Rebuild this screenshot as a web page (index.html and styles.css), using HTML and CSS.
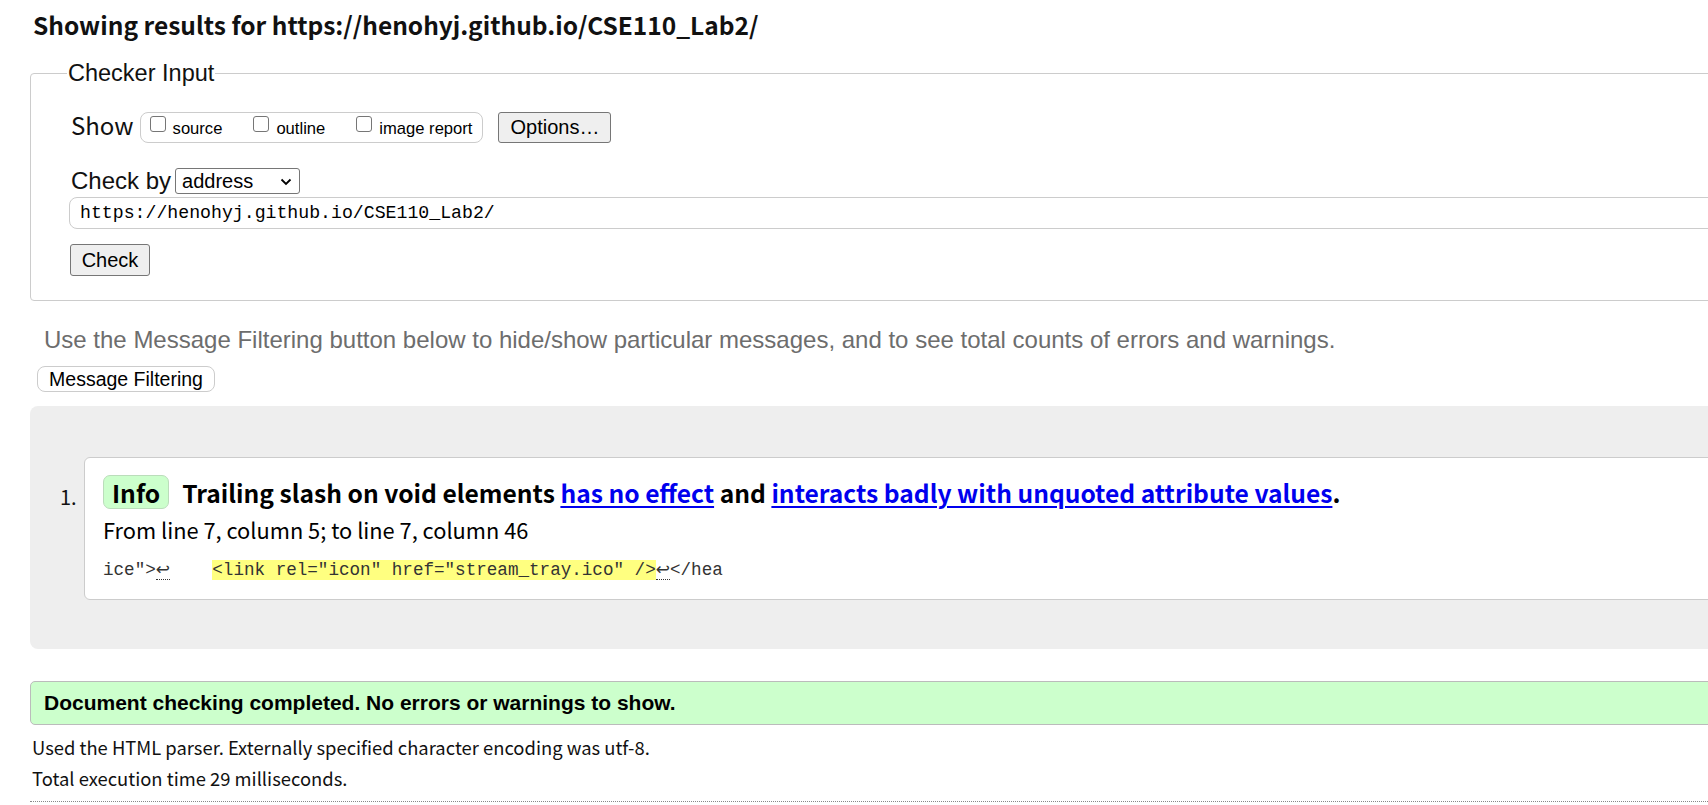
FILE: index.html
```html
<!DOCTYPE html>
<html lang="en">
<head>
<meta charset="utf-8">
<title>Showing results for https://henohyj.github.io/CSE110_Lab2/ - Nu Html Checker</title>
<link rel="stylesheet" href="styles.css">
</head>
<body>
<div class="page">
  <h2 class="results-title">Showing results for https://henohyj.github.io/CSE110_Lab2/</h2>

  <fieldset class="checker">
    <legend class="checker-legend">Checker Input</legend>
    <div class="show-row">
      <span class="row-label show-label">Show</span>
      <span class="show-group">
        <label class="opt"><input type="checkbox" class="cb"><span>source</span></label>
        <label class="opt"><input type="checkbox" class="cb"><span>outline</span></label>
        <label class="opt"><input type="checkbox" class="cb"><span>image report</span></label>
      </span>
      <button class="btn btn-options" type="button">Options…</button>
    </div>
    <div class="checkby-row">
      <span class="row-label">Check by</span>
      <span class="select-wrap">
        <select class="select"><option>address</option></select>
        <svg class="chev" width="12" height="8" viewBox="0 0 12 8"><path d="M1.5 1.5 L6 6 L10.5 1.5" fill="none" stroke="#000" stroke-width="1.8"/></svg>
      </span>
    </div>
    <div class="url-row">
      <input class="url" type="text" value="https://henohyj.github.io/CSE110_Lab2/">
    </div>
    <div class="check-row">
      <button class="btn btn-check" type="button">Check</button>
    </div>
  </fieldset>

  <p class="filter-note">Use the Message Filtering button below to hide/show particular messages, and to see total counts of errors and warnings.</p>
  <button class="btn-filter" type="button">Message Filtering</button>

  <div class="results">
    <ol class="messages">
      <li class="message">
        <span class="num">1.</span>
        <div class="msg-box">
          <p class="msg-title"><span class="badge">Info</span><span class="msg-text">Trailing slash on void elements <a href="#">has no effect</a> and <a href="#">interacts badly with unquoted attribute values</a>.</span></p>
          <p class="location">From line 7, column 5; to line 7, column 46</p>
          <p class="extract"><code>ice"&gt;<span class="lf">↩</span>    <mark class="hl">&lt;link rel="icon" href="stream_tray.ico" /&gt;</mark><span class="lf">↩</span>&lt;/hea</code></p>
        </div>
      </li>
    </ol>
  </div>

  <p class="success">Document checking completed. No errors or warnings to show.</p>
  <p class="details">Used the HTML parser. Externally specified character encoding was utf-8.</p>
  <p class="details">Total execution time 29 milliseconds.</p>
  <hr class="dotted">
</div>
</body>
</html>
```

FILE: styles.css
```css
html, body {
  margin: 0;
  padding: 0;
  overflow: hidden;
  background: #fff;
}

.page {
  width: 1800px;
  padding-left: 30px;
  font-family: "Liberation Sans", Arial, sans-serif;
  color: #000;
}

.results-title {
  margin: 0;
  padding: 8px 0 0 3px;
  height: 46px;
  box-sizing: border-box;
  font-family: "Noto Sans CJK SC", "Liberation Sans", sans-serif;
  font-weight: 700;
  font-size: 24.5px;
  line-height: 34px;
  color: #111;
}

.checker {
  margin: 14px 0 0 0;
  padding: 25px 0 24px 40px;
  border: 1px solid #ccc;
  border-radius: 4px;
}

.checker-legend {
  padding: 0 1px;
  margin-left: -4px;
  font-size: 23.5px;
  line-height: 26px;
  color: #111;
}

.show-row {
  display: flex;
  align-items: center;
  height: 32px;
}

.row-label {
  font-size: 24px;
  color: #111;
}

.show-label {
  font-family: "Noto Sans CJK SC", "Liberation Sans", sans-serif;
  font-size: 24px;
  margin-right: 6px;
  margin-bottom: 5px;
}

.show-group {
  display: flex;
  align-items: center;
  height: 31px;
  box-sizing: border-box;
  border: 1px solid #ccc;
  border-radius: 8px;
  padding: 0 10px 0 9px;
}

.opt {
  display: flex;
  align-items: center;
  font-size: 16.6px;
  margin-right: 31px;
}
.opt:last-child { margin-right: 0; }

.cb {
  appearance: none;
  -webkit-appearance: none;
  margin: 0 7px 6px 0;
  width: 16px;
  height: 16px;
  border: 1px solid #767676;
  border-radius: 3px;
  background: #fff;
}

.opt span { padding-top: 4px; }

.btn {
  font-family: "Liberation Sans", Arial, sans-serif;
  background: #efefef;
  border: 1px solid #767676;
  border-radius: 3px;
  color: #000;
  padding: 0;
}

.btn-options {
  margin-left: 15px;
  width: 113px;
  height: 31px;
  font-size: 20px;
}

.checkby-row {
  display: flex;
  align-items: center;
  margin-top: 25px;
  height: 26px;
}

.select-wrap {
  position: relative;
  margin-left: 4px;
  display: inline-block;
}

.select {
  appearance: none;
  -webkit-appearance: none;
  width: 125px;
  height: 26px;
  border: 1px solid #767676;
  border-radius: 3px;
  background: #fff;
  font-family: "Liberation Sans", Arial, sans-serif;
  font-size: 20px;
  padding: 0 0 0 6px;
  color: #000;
}

.chev {
  position: absolute;
  right: 8px;
  top: 10px;
  pointer-events: none;
}

.url-row {
  margin-top: 3px;
  margin-left: -2px;
}

.url {
  display: block;
  width: 100%;
  height: 32px;
  box-sizing: border-box;
  border: 1px solid #ccc;
  border-radius: 8px;
  padding: 0 0 0 10px;
  font-family: "Liberation Mono", "DejaVu Sans Mono", monospace;
  font-size: 18.2px;
  color: #000;
}

.check-row {
  margin-top: 15px;
  margin-left: -1px;
}

.btn-check {
  width: 80px;
  height: 32px;
  font-size: 20px;
}

.filter-note {
  margin: 26px 0 0 14px;
  font-size: 24px;
  line-height: 26px;
  color: #6d6d6d;
}

.btn-filter {
  display: block;
  margin: 13px 0 0 7px;
  height: 26px;
  width: 178px;
  padding: 0;
  background: #fff;
  border: 1px solid #ccc;
  border-radius: 8px;
  font-family: "Liberation Sans", Arial, sans-serif;
  font-size: 19.5px;
  color: #000;
}

.results {
  margin-top: 14px;
  background: #eee;
  border-radius: 8px;
  padding: 51px 0 49px 0;
}

.messages {
  list-style: none;
  margin: 0;
  padding: 0;
}

.message {
  display: flex;
  align-items: flex-start;
}

.num {
  width: 54px;
  padding-left: 30px;
  padding-top: 25px;
  font-family: "Noto Sans CJK SC", "Liberation Sans", sans-serif;
  font-size: 20px;
  color: #111;
  box-sizing: border-box;
}

.msg-box {
  flex: 1;
  background: #fff;
  border: 1px solid #ccc;
  border-radius: 6px;
  padding: 17px 0 14px 18px;
  min-height: 143px;
  box-sizing: border-box;
}

.msg-title {
  margin: 0;
  display: flex;
  align-items: center;
  font-family: "Noto Sans CJK SC", "Liberation Sans", sans-serif;
  font-weight: 700;
  font-size: 24.6px;
  line-height: 34px;
  color: #000;
}

.badge {
  display: inline-block;
  background: #cfc;
  border: 1px solid #bdb;
  border-radius: 7px;
  padding: 0 8px;
  height: 32px;
  line-height: 32px;
  margin-right: 13px;
  font-weight: 700;
}

.msg-text a {
  color: #00e;
  text-decoration: underline;
  text-decoration-thickness: 2px;
  text-underline-offset: 3px;
}

.location {
  margin: 5px 0 0 0;
  font-family: "Noto Sans CJK SC", "Liberation Sans", sans-serif;
  font-size: 21.8px;
  line-height: 32px;
  color: #000;
}

.extract {
  margin: 9px 0 0 0;
  white-space: pre;
  line-height: 28px;
}

.extract code {
  font-family: "Liberation Mono", "Noto Sans CJK SC", monospace;
  font-size: 17.6px;
  color: #333;
}

.lf {
  font-family: "DejaVu Sans", "Liberation Mono", monospace;
  font-size: 17px;
  border-bottom: 1px dotted #333;
}

.hl {
  background: #ffff80;
  color: #333;
}

.success {
  margin: 32px 0 0 0;
  background: #cfc;
  border: 1px solid #bbb;
  border-radius: 5px;
  padding: 0 0 0 13px;
  height: 44px;
  box-sizing: border-box;
  line-height: 42px;
  font-family: "Liberation Sans", Arial, sans-serif;
  font-weight: 700;
  font-size: 21px;
  color: #000;
}

.details {
  margin: 8px 0 0 2px;
  font-family: "Noto Sans CJK SC", "Liberation Sans", sans-serif;
  font-size: 18.4px;
  line-height: 23px;
  color: #111;
}

.success + .details {
  margin-top: 11px;
}

.dotted {
  margin: 11px 0 0 0;
  border: 0;
  border-top: 1px dotted #888;
  height: 0;
}
```
